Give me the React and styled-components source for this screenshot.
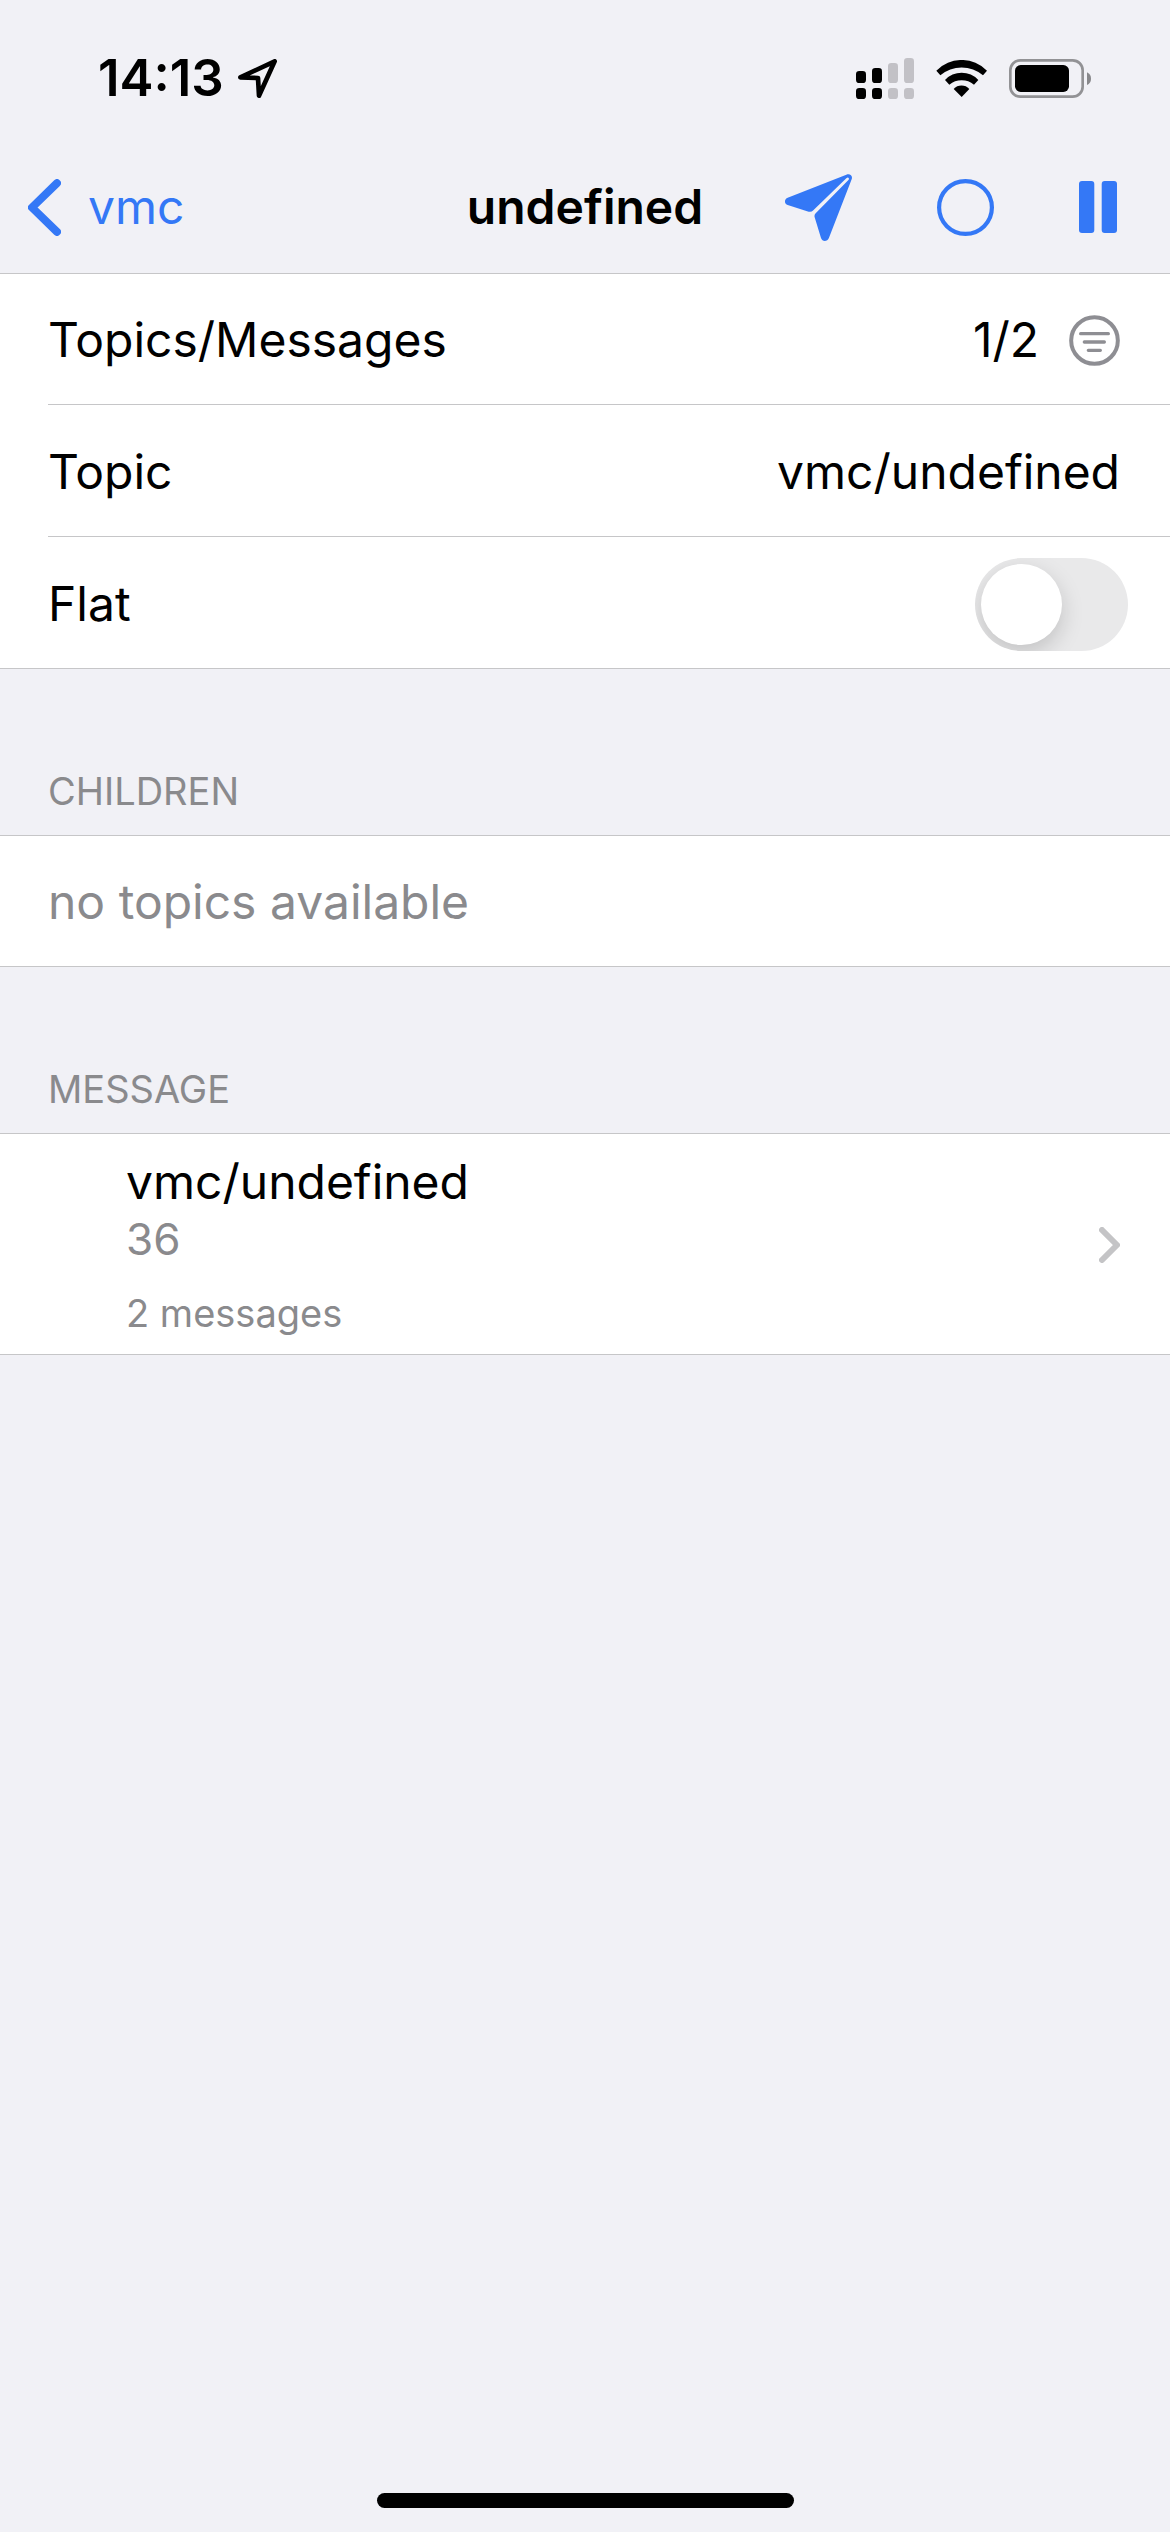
import React, { useState } from "react";
import styled, { createGlobalStyle } from "styled-components";

const color = {
  page: "#f1f1f6",
  card: "#ffffff",
  line: "#c6c6c8",
  text: "#000000",
  muted: "#8a8a8d",
  accent: "#3478f6",
  faint: "#c4c4c6",
};

const GlobalStyle = createGlobalStyle`
  *, *::before, *::after { box-sizing: border-box; }
  body {
    margin: 0;
    background: ${color.page};
    color: ${color.text};
    font-family: Inter, "Liberation Sans", sans-serif;
    font-size: 48px;
    line-height: 60px;
  }
  svg { display: block; flex: none; }
`;

const Screen = styled.div`
  min-height: 100vh;
  display: flex;
  flex-direction: column;
`;

const StatusBar = styled.div`
  display: flex;
  align-items: center;
  justify-content: space-between;
  height: 141px;
  padding: 15px 79px 0 98px;
`;

const StatusGroup = styled.div`
  display: flex;
  align-items: center;
  gap: ${(p) => p.$gap}px;
`;

const Time = styled.time`
  font-size: 51px;
  font-weight: 600;
`;

const NavBar = styled.nav`
  display: grid;
  grid-template-columns: 1fr auto 1fr;
  align-items: center;
  height: 132px;
`;

const BackLink = styled.a`
  display: flex;
  align-items: center;
  gap: 27px;
  padding-left: 28px;
  color: ${color.accent};
  text-decoration: none;
`;

const Title = styled.h1`
  margin: 0;
  font-size: inherit;
  font-weight: 600;
`;

const Actions = styled.div`
  display: flex;
  align-items: center;
  justify-content: flex-end;
  gap: 85px;
  padding-right: 53px;
`;

const IconButton = styled.button`
  padding: 0;
  border: 0;
  background: none;
  color: ${(p) => p.$color || color.accent};
  cursor: pointer;
`;

const Content = styled.main`
  flex: 1;
`;

const Card = styled.div`
  background: ${color.card};
  box-shadow: inset 0 1px ${color.line}, inset 0 -1px ${color.line};
`;

const Row = styled.div`
  display: flex;
  align-items: center;
  justify-content: space-between;
  min-height: 132px;
  margin-left: 48px;
  padding: 2px ${(p) => p.$end || 50}px 0 0;
  color: ${(p) => (p.$muted ? color.muted : color.text)};

  & + & {
    box-shadow: 0 -1px ${color.line};
  }
`;

const RowValue = styled.span`
  display: flex;
  align-items: center;
  gap: 30px;
`;

const SectionTitle = styled.h2`
  margin: 0;
  padding: 98px 48px 20px;
  color: ${color.muted};
  font-size: 38px;
  font-weight: 400;
  line-height: 48px;
`;

const Switch = styled.input`
  appearance: none;
  flex: none;
  width: 153px;
  height: 93px;
  margin: 0;
  padding: 6px;
  border-radius: 47px;
  background: ${(p) => (p.checked ? "#34c759" : "#e9e9ea")};
  overflow: hidden;
  cursor: pointer;

  &::before {
    content: "";
    display: block;
    width: 81px;
    height: 81px;
    margin-left: ${(p) => (p.checked ? 60 : 0)}px;
    border-radius: 50%;
    background: #ffffff;
    box-shadow: 0 8px 22px rgba(0, 0, 0, 0.17);
  }
`;

const MessageLink = styled.a`
  display: flex;
  align-items: center;
  justify-content: space-between;
  padding: 19px 50px 18px 126px;
  color: inherit;
  text-decoration: none;
`;

const MessageText = styled.div`
  display: flex;
  flex-direction: column;
`;

const Payload = styled.span`
  margin-bottom: 23px;
  color: ${color.muted};
  font-size: 44px;
  line-height: 54px;
`;

const Count = styled.span`
  color: ${color.muted};
  font-size: 38px;
  line-height: 48px;
`;

const HomeIndicator = styled.div`
  align-self: center;
  width: 417px;
  height: 15px;
  margin-bottom: 24px;
  border-radius: 8px;
  background: #000000;
`;

function LocationIcon() {
  return (
    <svg width="39" height="39" viewBox="718 86 117 117" aria-hidden="true">
      <path
        d="M725 141 L828 93 L781 196 L778 143 Z"
        fill="none"
        stroke="#000"
        strokeWidth="14"
        strokeLinejoin="round"
      />
    </svg>
  );
}

function SignalIcon() {
  const bars = [
    { x: 228, top: 120, on: true },
    { x: 276, top: 111, on: true },
    { x: 324, top: 96, on: false },
    { x: 372, top: 81, on: false },
  ];
  return (
    <svg width="58" height="41" viewBox="228 81 174 123" aria-hidden="true">
      {bars.map((b) => (
        <g key={b.x} fill={b.on ? "#000" : "#c2c1c6"}>
          <rect x={b.x} y={b.top} width="30" height={156 - b.top} rx="10" />
          <rect x={b.x} y="171" width="30" height="33" rx="10" />
        </g>
      ))}
    </svg>
  );
}

function WifiIcon() {
  return (
    <svg width="51" height="37" viewBox="468 87 153 111" aria-hidden="true">
      <path d="M469 119 A106 106 0 0 1 621 119 L609 133 A99 99 0 0 0 481 133 Z" />
      <path d="M495 147 A68 68 0 0 1 595 147 L582 161 A58 58 0 0 0 508 161 Z" />
      <path d="M521 174 A32 32 0 0 1 568 174 L545 198 Z" />
    </svg>
  );
}

function BatteryIcon() {
  return (
    <svg width="82" height="39" viewBox="687 84 246 117" aria-hidden="true">
      <rect x="691" y="88" width="217" height="109" rx="30" fill="none" stroke="#929295" strokeWidth="8" />
      <rect x="705" y="102" width="162" height="81" rx="17" />
      <path d="M921 124 Q933 130 933 143 Q933 156 921 162 Z" fill="#88888b" />
    </svg>
  );
}

function BackIcon() {
  return (
    <svg width="33" height="57" viewBox="84 445 99 170" aria-hidden="true">
      <path
        d="M171 457 L96 530 L171 603"
        fill="none"
        stroke="currentColor"
        strokeWidth="24"
        strokeLinecap="round"
        strokeLinejoin="round"
      />
    </svg>
  );
}

function SendIcon() {
  return (
    <svg width="67" height="67" viewBox="12 432 201 201" aria-hidden="true">
      <path
        fill="currentColor"
        d="M20 503 L196 434 C207 430 216 437 212 448 L144 623 C139 636 124 636 120 624 L101 562 Q99 555 104 550 L203 449 Q205 445 202 443 Q199 442 196 445 L97 541 Q91 547 83 545 L20 525 C9 521 9 508 20 503 Z"
      />
    </svg>
  );
}

function CircleIcon() {
  return (
    <svg width="57" height="57" viewBox="0 0 57 57" aria-hidden="true">
      <circle cx="28.5" cy="28.5" r="26.4" fill="none" stroke="currentColor" strokeWidth="4.2" />
    </svg>
  );
}

function PauseIcon() {
  return (
    <svg width="38" height="52" viewBox="0 0 38 52" aria-hidden="true" fill="currentColor">
      <rect width="15.3" height="52" rx="3" />
      <rect x="22.7" width="15.3" height="52" rx="3" />
    </svg>
  );
}

function FilterIcon() {
  return (
    <svg
      width="51"
      height="51"
      viewBox="981 162 153 153"
      aria-hidden="true"
      fill="none"
      stroke="currentColor"
      strokeLinecap="round"
    >
      <circle cx="1057.5" cy="238.5" r="70" strokeWidth="12" />
      <path d="M1016 218 H1099 M1027 243 H1087 M1039 268 H1075" strokeWidth="10" />
    </svg>
  );
}

function DisclosureIcon() {
  return (
    <svg width="21" height="36" viewBox="297 348 63 108" aria-hidden="true">
      <path
        d="M306 357 L351 402 L306 447"
        fill="none"
        stroke={color.faint}
        strokeWidth="18"
        strokeLinecap="round"
        strokeLinejoin="round"
      />
    </svg>
  );
}

export default function App() {
  const [flat, setFlat] = useState(false);

  return (
    <>
      <GlobalStyle />
      <Screen>
        <StatusBar>
          <StatusGroup $gap={14}>
            <Time>14:13</Time>
            <LocationIcon />
          </StatusGroup>
          <StatusGroup $gap={22}>
            <SignalIcon />
            <WifiIcon />
            <BatteryIcon />
          </StatusGroup>
        </StatusBar>

        <NavBar>
          <BackLink href="#vmc">
            <BackIcon />
            vmc
          </BackLink>
          <Title>undefined</Title>
          <Actions>
            <IconButton type="button" aria-label="Publish">
              <SendIcon />
            </IconButton>
            <IconButton type="button" aria-label="Mark as read">
              <CircleIcon />
            </IconButton>
            <IconButton type="button" aria-label="Pause">
              <PauseIcon />
            </IconButton>
          </Actions>
        </NavBar>

        <Content>
          <Card>
            <Row>
              <span>Topics/Messages</span>
              <RowValue>
                1/2
                <IconButton type="button" aria-label="Filter" $color="#8e8e93">
                  <FilterIcon />
                </IconButton>
              </RowValue>
            </Row>
            <Row>
              <span>Topic</span>
              <span>vmc/undefined</span>
            </Row>
            <Row $end={42}>
              <label htmlFor="flat">Flat</label>
              <Switch
                id="flat"
                type="checkbox"
                role="switch"
                checked={flat}
                onChange={(e) => setFlat(e.target.checked)}
              />
            </Row>
          </Card>

          <SectionTitle>CHILDREN</SectionTitle>
          <Card>
            <Row $muted>no topics available</Row>
          </Card>

          <SectionTitle>MESSAGE</SectionTitle>
          <Card>
            <MessageLink href="#messages">
              <MessageText>
                <span>vmc/undefined</span>
                <Payload>36</Payload>
                <Count>2 messages</Count>
              </MessageText>
              <DisclosureIcon />
            </MessageLink>
          </Card>
        </Content>

        <HomeIndicator />
      </Screen>
    </>
  );
}
